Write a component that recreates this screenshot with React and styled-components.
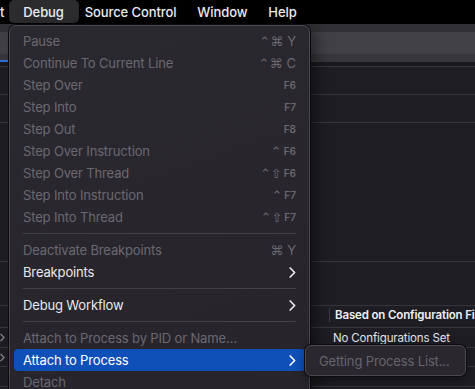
import React from "react";
import styled, { createGlobalStyle, css } from "styled-components";

const Global = createGlobalStyle`
  html, body { margin: 0; padding: 0; background: #000; }
  body { font-family: Inter, "Noto Sans", sans-serif; -webkit-font-smoothing: antialiased; }
`;

const Screen = styled.div`
  position: relative;
  width: 475px;
  height: 389px;
  overflow: hidden;
  background: #1f1d24;
`;

const MenuBar = styled.div`
  height: 24px;
  background: #000;
  display: flex;
  align-items: center;
  font-size: 13px;
  font-weight: 500;
  letter-spacing: -0.1px;
  color: #ececee;
`;

const MenuTitle = styled.div`
  position: relative;
  padding: 0 10.5px;
  line-height: 24px;
  z-index: 0;
  white-space: nowrap;
  ${(p) => p.$first && css`padding: 0 8.5px 0 0;`}
  ${(p) =>
    p.$active &&
    css`
      &::before {
        content: "";
        position: absolute;
        z-index: -1;
        top: 0;
        bottom: 1px;
        left: -3.5px;
        right: -4.5px;
        border-radius: 5px;
        background: #2c2b2e;
      }
    `}
`;

const Band = styled.div`
  height: ${(p) => p.$h}px;
  background: ${(p) => p.$bg};
`;

const TabStrip = styled.div`
  height: 8px;
  background: #37363b;
  display: flex;
  align-items: flex-end;
`;

const Tab = styled.div`
  width: 120px;
  height: 2px;
  background: #2f6fd8;
`;

const ListRow = styled.div`
  height: ${(p) => p.$h}px;
  border-bottom: 1px solid #38363d;
  background: ${(p) => p.$bg || "#1f1d24"};
  display: flex;
  align-items: center;
  box-sizing: border-box;
  font-size: 11.5px;
  letter-spacing: -0.15px;
  color: #e4e4e6;
  ${(p) => p.$padBottom && css`padding-bottom: ${p.$padBottom}px;`}
`;

const Disclosure = styled.svg`
  width: 5px;
  height: 9px;
  flex: none;
  color: #8d8b92;
`;

const HeaderCell = styled.div`
  flex: none;
  margin-left: 329px;
  border-left: 1px solid #3f3d44;
  padding-left: 5px;
  height: 14px;
  line-height: 14px;
  font-weight: 600;
  color: #f0f0f2;
  white-space: nowrap;
`;

const ValueCell = styled.div`
  flex: none;
  margin-left: 328px;
  white-space: nowrap;
`;

const DropMenu = styled.div`
  position: absolute;
  left: 9px;
  top: 25px;
  width: 301px;
  height: 390px;
  box-sizing: border-box;
  padding: 4px 4px;
  background: linear-gradient(160deg, #2b2930 0%, #28252d 60%, #27242c 100%);
  border: 1px solid #4a474f;
  border-radius: 7px;
  box-shadow: 0 0 0 1px #0c0b0e, 6px 4px 14px rgba(0, 0, 0, 0.45);
  font-size: 13px;
  letter-spacing: -0.15px;
`;

const Item = styled.div`
  height: 22px;
  display: flex;
  align-items: center;
  padding: 0 9px;
  border-radius: 4px;
  color: ${(p) => (p.$disabled ? "#6b6870" : "#e9e9eb")};
  background: ${(p) => (p.$active ? "#0f4fb8" : "transparent")};
  ${(p) => p.$active && css`color: #ffffff;`}
`;

const Label = styled.span`
  flex: 1;
  white-space: nowrap;
`;

const Keys = styled.span`
  display: flex;
  align-items: center;
  gap: 1px;
  font-family: "DejaVu Sans", sans-serif;
  font-size: 13px;
  letter-spacing: 0;
`;

const KeyCap = styled.span`
  font-family: Inter, sans-serif;
  ${(p) =>
    p.$small
      ? css`
          font-size: 10px;
          font-weight: 600;
          margin-left: 1px;
        `
      : css`
          font-size: 13px;
          margin-left: 3px;
        `}
`;

const Separator = styled.div`
  height: 11px;
  display: flex;
  align-items: center;
  padding: 0 9px;
  &::after {
    content: "";
    flex: 1;
    height: 1px;
    background: #434148;
  }
`;

const SubMenu = styled.div`
  position: absolute;
  left: 305px;
  top: 345px;
  width: 161px;
  height: 31px;
  box-sizing: border-box;
  padding-left: 13px;
  display: flex;
  align-items: center;
  background: #2a272e;
  border: 1px solid #4a474f;
  border-radius: 6px;
  box-shadow: 0 0 0 1px #0c0b0e, 0 4px 12px rgba(0, 0, 0, 0.4);
  font-size: 13px;
  letter-spacing: -0.15px;
  color: #67646c;
  white-space: nowrap;
`;

const Chevron = () => (
  <svg width="7" height="11" viewBox="0 0 7 11">
    <polyline points="1.2,1 5.6,5.5 1.2,10" fill="none" stroke="currentColor" strokeWidth="1.7" strokeLinecap="round" strokeLinejoin="round" />
  </svg>
);

const RowChevron = () => (
  <Disclosure viewBox="0 0 5 9">
    <polyline points="0.5,0.8 4,4.5 0.5,8.2" fill="none" stroke="currentColor" strokeWidth="1.2" />
  </Disclosure>
);

const items = [
  { label: "Pause", mods: "⌃⌘", key: "Y", disabled: true },
  { label: "Continue To Current Line", mods: "⌃⌘", key: "C", disabled: true },
  { label: "Step Over", key: "F6", small: true, disabled: true },
  { label: "Step Into", key: "F7", small: true, disabled: true },
  { label: "Step Out", key: "F8", small: true, disabled: true },
  { label: "Step Over Instruction", mods: "⌃", key: "F6", small: true, disabled: true },
  { label: "Step Over Thread", mods: "⌃⇧", key: "F6", small: true, disabled: true },
  { label: "Step Into Instruction", mods: "⌃", key: "F7", small: true, disabled: true },
  { label: "Step Into Thread", mods: "⌃⇧", key: "F7", small: true, disabled: true },
  { sep: true },
  { label: "Deactivate Breakpoints", mods: "⌘", key: "Y", disabled: true },
  { label: "Breakpoints", sub: true },
  { sep: true },
  { label: "Debug Workflow", sub: true },
  { sep: true },
  { label: "Attach to Process by PID or Name…", disabled: true },
  { label: "Attach to Process", sub: true, active: true },
  { label: "Detach", disabled: true },
];

export default function App() {
  return (
    <>
      <Global />
      <Screen>
        <MenuBar>
          <MenuTitle $first>t</MenuTitle>
          <MenuTitle $active>Debug</MenuTitle>
          <MenuTitle>Source Control</MenuTitle>
          <MenuTitle>Window</MenuTitle>
          <MenuTitle>Help</MenuTitle>
        </MenuBar>
        <Band $h={8} $bg="#313034" />
        <Band $h={22} $bg="#414046" />
        <TabStrip>
          <Tab />
        </TabStrip>
        <ListRow $h={5} $bg="#1a191e" />
        <ListRow $h={28} />
        <ListRow $h={28} />
        <ListRow $h={139} />
        <ListRow $h={44} />
        <ListRow $h={22} $padBottom={4}>
          <HeaderCell>Based on Configuration File</HeaderCell>
        </ListRow>
        <ListRow $h={20}>
          <RowChevron />
          <ValueCell>No Configurations Set</ValueCell>
        </ListRow>
        <ListRow $h={19}>
          <RowChevron />
        </ListRow>
        <ListRow $h={20} />
        <ListRow $h={20} />

        <DropMenu>
          {items.map((it, i) =>
            it.sep ? (
              <Separator key={i} />
            ) : (
              <Item key={i} $disabled={it.disabled} $active={it.active}>
                <Label>{it.label}</Label>
                {it.key && (
                  <Keys>
                    {it.mods}
                    <KeyCap $small={it.small}>{it.key}</KeyCap>
                  </Keys>
                )}
                {it.sub && <Chevron />}
              </Item>
            )
          )}
        </DropMenu>
        <SubMenu>Getting Process List...</SubMenu>
      </Screen>
    </>
  );
}
